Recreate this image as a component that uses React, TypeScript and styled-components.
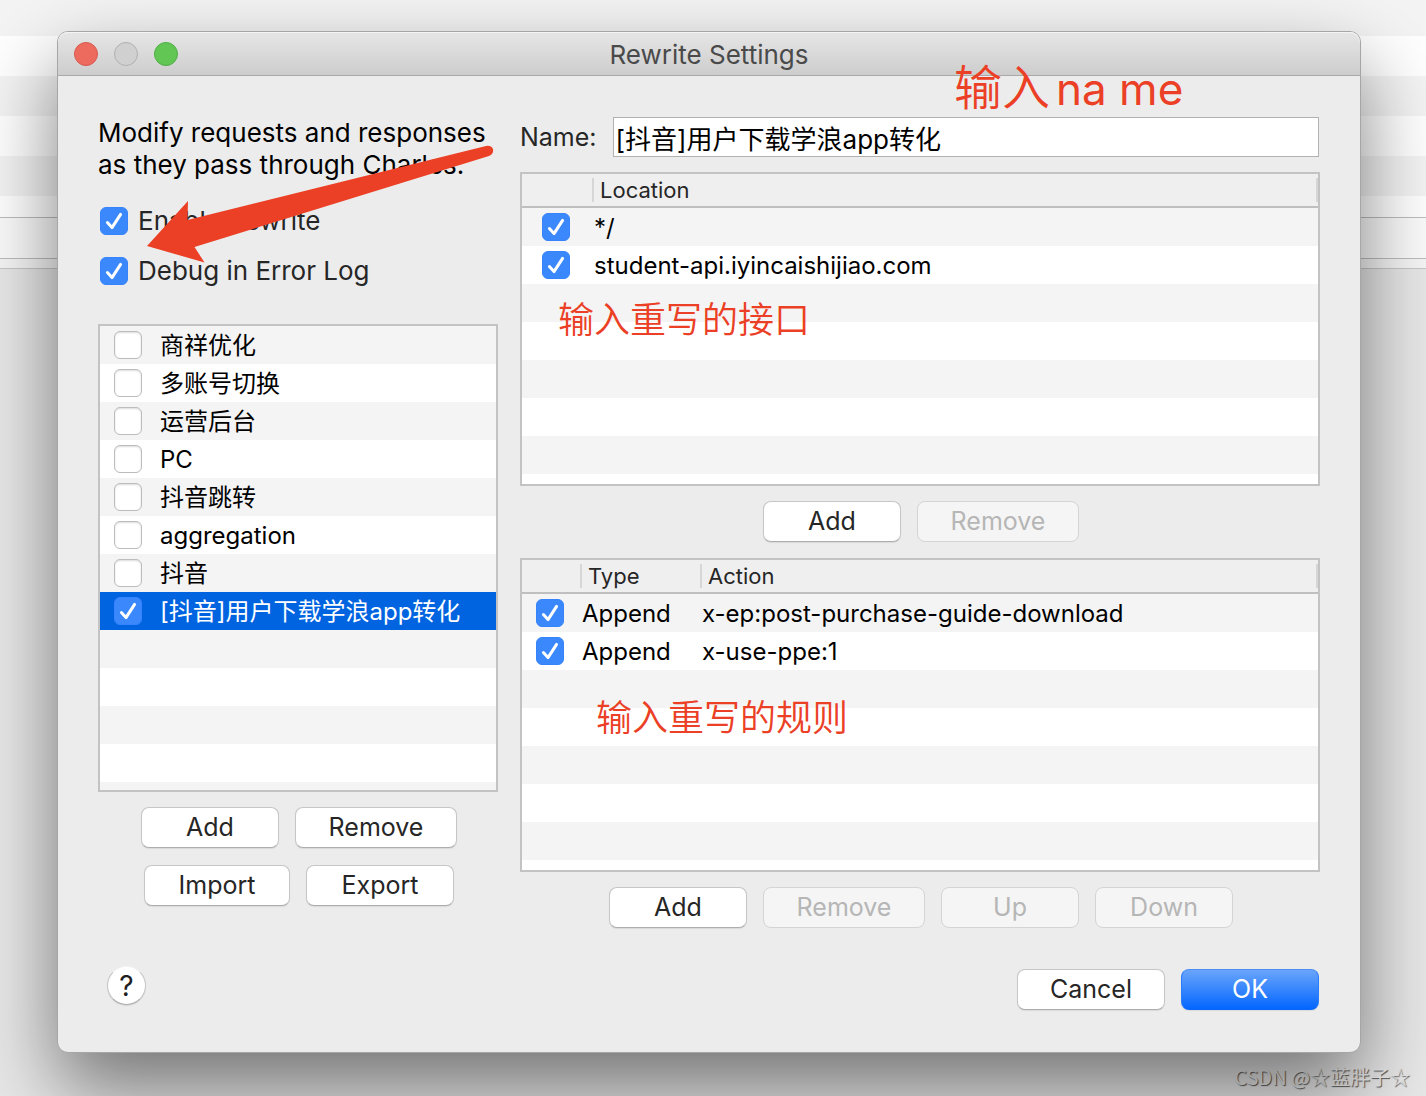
import React, { useId, useState } from "react";
import styled, { createGlobalStyle } from "styled-components";

const stripe = "#f4f4f4";
const frame = "#c3c3c3";
const red = "#eb4025";

const GlobalStyle = createGlobalStyle`
  * { box-sizing: border-box; }
  body {
    margin: 0;
    font-family: Inter, "Noto Sans CJK SC", sans-serif;
    font-size: 26px;
    line-height: 32px;
    color: #262626;
    background: #e8e8e8;
  }
`;

const Page = styled.div`
  display: grid;
  min-height: 100vh;
  overflow: hidden;
`;

const Backdrop = styled.div`
  grid-area: 1 / 1;
  background: #e8e8e8;
`;

const BackdropRow = styled.div<{ $tone: string; $height: number; $line?: string }>`
  height: ${(p) => p.$height}px;
  background: ${(p) => p.$tone};
  border-bottom: ${(p) => (p.$line ? `1px solid ${p.$line}` : "none")};
`;

const Watermark = styled.div`
  grid-area: 1 / 1;
  align-self: end;
  justify-self: end;
  padding: 0 16px 4px 0;
  font: 20px/30px "Noto Sans CJK SC", sans-serif;
  color: #ececec;
  text-shadow: 1px 1px 1px #555;
`;

const Dialog = styled.main`
  grid-area: 1 / 1;
  position: relative;
  align-self: start;
  margin: 31px 65px 43px 57px;
  border: 1px solid #a6a6a6;
  border-radius: 11px;
  background: #ececec;
  box-shadow: 0 36px 80px rgba(0, 0, 0, 0.5);
`;

const TitleBar = styled.header`
  display: grid;
  grid-template-columns: 1fr auto 1fr;
  align-items: center;
  height: 44px;
  padding: 0 16px;
  border-bottom: 1px solid #a9a9a9;
  border-radius: 10px 10px 0 0;
  background: linear-gradient(#e6e6e6, #cdcdcd);
  box-shadow: inset 0 1px #f4f4f4;
`;

const Lights = styled.div`
  display: flex;
  gap: 16px;
`;

const Light = styled.button<{ $fill: string; $edge: string }>`
  width: 24px;
  height: 24px;
  padding: 0;
  border: 1px solid ${(p) => p.$edge};
  border-radius: 50%;
  background: ${(p) => p.$fill};
`;

const Title = styled.h1`
  margin: 0;
  padding-top: 2px;
  font-size: 26px;
  font-weight: 400;
  line-height: 32px;
  color: #4a4a4a;
`;

const Body = styled.div`
  display: flex;
  gap: 22px;
  padding: 41px 40px 0;
`;

const Side = styled.section`
  flex: 0 0 400px;
`;

const Detail = styled.section`
  flex: 1;
  min-width: 0;
`;

const Intro = styled.p`
  margin: 0 0 24px;
  color: #000;
  white-space: nowrap;
`;

const Options = styled.div`
  display: grid;
  gap: 18px;
  padding-left: 2px;
  margin-bottom: 37px;
`;

const Option = styled.label`
  display: flex;
  align-items: center;
  gap: 10px;
`;

const TickBox = styled.span`
  display: inline-grid;
  flex: none;
  width: 28px;
  height: 28px;
  & > * { grid-area: 1 / 1; }
`;

const TickInput = styled.input`
  appearance: none;
  width: 28px;
  height: 28px;
  margin: 0;
  border: 1px solid #bcbcbc;
  border-radius: 6px;
  background: #fff;
  box-shadow: inset 0 1px 2px rgba(0, 0, 0, 0.14);
  &:checked {
    border-color: #3683fc;
    background: #3b88fd;
    box-shadow: none;
  }
  & + svg { visibility: hidden; pointer-events: none; }
  &:checked + svg { visibility: visible; }
`;

const RuleList = styled.ul`
  height: 468px;
  margin: 0;
  padding: 0;
  list-style: none;
  border: 2px solid ${frame};
  background: repeating-linear-gradient(${stripe} 0 38px, #fff 38px 76px);
`;

const RuleRow = styled.li<{ $selected: boolean }>`
  background: ${(p) => (p.$selected ? "#0064e1" : "transparent")};
  color: ${(p) => (p.$selected ? "#fff" : "#000")};
`;

const RuleLabel = styled.label`
  display: flex;
  align-items: center;
  gap: 18px;
  height: 38px;
  padding-left: 14px;
  font-size: 24px;
  white-space: nowrap;
`;

const RuleName = styled.span`
  padding-top: 2px;
`;

const Buttons = styled.div<{ $top: number }>`
  display: flex;
  justify-content: center;
  gap: 16px;
  margin-top: ${(p) => p.$top}px;
  padding-left: 2px;
`;

const Button = styled.button<{ $width: number }>`
  width: ${(p) => p.$width}px;
  height: 41px;
  padding: 0 0 2px;
  border: 1px solid #c6c6c6;
  border-bottom-color: #adadad;
  border-radius: 8px;
  background: #fff;
  box-shadow: 0 1px 1px rgba(0, 0, 0, 0.08);
  color: #262626;
  font: inherit;
  font-size: 25px;
  &:disabled {
    border-color: #d4d4d4;
    background: #f5f5f5;
    box-shadow: none;
    color: #b6b6b6;
  }
`;

const PrimaryButton = styled(Button)`
  border-color: #4a8ef5 #2a7cfb #0a68fa;
  background: linear-gradient(#6aa5fb, #0366ff);
  color: #fff;
`;

const NameRow = styled.div`
  display: flex;
  align-items: center;
  gap: 16px;
  margin-bottom: 15px;
  padding-right: 1px;
  label { font-size: 25px; }
`;

const NameInput = styled.input`
  flex: 1;
  min-width: 0;
  height: 40px;
  padding: 0 2px;
  border: 1px solid #b1b1b1;
  border-radius: 0;
  background: #fff;
  color: #000;
  font: inherit;
`;

const TableFrame = styled.div`
  height: 314px;
  border: 2px solid ${frame};
  background: repeating-linear-gradient(${stripe} 0 38px, #fff 38px 76px) 0 34px no-repeat;
  & + div + & { margin-top: 16px; }
`;

const Table = styled.table`
  width: 100%;
  table-layout: fixed;
  border-collapse: separate;
  border-spacing: 0;
  th {
    height: 34px;
    padding: 0;
    border-bottom: 2px solid #bfbfbf;
    background: #efefef;
    font-size: 22px;
    font-weight: 400;
    line-height: 24px;
    text-align: left;
  }
  td {
    height: 38px;
    padding: 2px 0 0 2px;
    font-size: 24px;
    line-height: 32px;
    color: #000;
    white-space: nowrap;
  }
  td:first-child { padding: 0; }
`;

const Heading = styled.span`
  display: block;
  height: 24px;
  padding-left: 6px;
  border-left: 2px solid #d6d6d6;
`;

const LastHeading = styled(Heading)`
  border-right: 2px solid #d6d6d6;
`;

const TickCell = styled.div`
  display: flex;
  justify-content: center;
  padding-right: 2px;
`;

const Footer = styled.footer`
  display: flex;
  align-items: center;
  gap: 16px;
  padding: 38px 41px 39px 49px;
`;

const HelpButton = styled.button`
  width: 39px;
  height: 39px;
  margin: 0 auto 8px 0;
  padding: 0;
  border: 1px solid #c6c6c6;
  border-top-color: #f2f2f2;
  border-bottom-color: #adadad;
  border-radius: 50%;
  background: #fff;
  box-shadow: 0 1px 1px rgba(0, 0, 0, 0.1);
  color: #1e1e1e;
  font: inherit;
  font-size: 28px;
`;

const Note = styled.div<{ $x: number; $y: number; $size: number }>`
  position: absolute;
  left: ${(p) => p.$x}px;
  top: ${(p) => p.$y}px;
  display: flex;
  align-items: baseline;
  gap: 6px;
  font-size: ${(p) => p.$size}px;
  font-weight: 350;
  line-height: 56px;
  color: ${red};
  white-space: nowrap;
  pointer-events: none;
`;

const NoteLatin = styled.span`
  font-size: 44px;
  font-weight: 400;
`;

const Arrow = styled.svg`
  position: absolute;
  left: 82px;
  top: 108px;
  pointer-events: none;
`;

function Tick(props: { id?: string; label?: string; on: boolean }) {
  const [on, setOn] = useState(props.on);
  return (
    <TickBox>
      <TickInput
        type="checkbox"
        id={props.id}
        aria-label={props.label}
        checked={on}
        onChange={(e) => setOn(e.target.checked)}
      />
      <svg width="28" height="28" viewBox="0 0 28 28" fill="none" aria-hidden="true">
        <path d="M7.400 15.600L12 20.600L20.600 7.400" stroke="#fff" strokeWidth="3" strokeLinecap="round" strokeLinejoin="round" />
      </svg>
    </TickBox>
  );
}

const rules = ["商祥优化", "多账号切换", "运营后台", "PC", "抖音跳转", "aggregation", "抖音", "[抖音]用户下载学浪app转化"];
const locations = ["*/", "student-api.iyincaishijiao.com"];
const actions = [
  ["Append", "x-ep:post-purchase-guide-download"],
  ["Append", "x-use-ppe:1"],
];

export default function App() {
  const id = useId();
  const [name, setName] = useState(rules[7]);
  return (
    <Page>
      <GlobalStyle />
      <Backdrop>
        <BackdropRow $tone="#f4f4f4" $height={36} />
        <BackdropRow $tone="#ffffff" $height={40} />
        <BackdropRow $tone="#f4f4f4" $height={40} />
        <BackdropRow $tone="#ffffff" $height={40} />
        <BackdropRow $tone="#f4f4f4" $height={40} />
        <BackdropRow $tone="#ffffff" $height={22} $line="#bdbdbd" />
        <BackdropRow $tone="#fbfbfb" $height={41} $line="#bdbdbd" />
        <BackdropRow $tone="#f6f6f6" $height={10} $line="#c8c8c8" />
      </Backdrop>
      <Dialog>
        <TitleBar>
          <Lights>
            <Light aria-label="Close" $fill="#ed6a5f" $edge="#d9584e" />
            <Light aria-label="Minimize" $fill="#d0d0d0" $edge="#b0b0b0" />
            <Light aria-label="Zoom" $fill="#62c655" $edge="#4fae43" />
          </Lights>
          <Title>Rewrite Settings</Title>
        </TitleBar>
        <Body>
          <Side>
            <Intro>
              Modify requests and responses
              <br />
              as they pass through Charles.
            </Intro>
            <Options>
              <Option htmlFor={id + "e"}>
                <Tick id={id + "e"} on />
                Enable Rewrite
              </Option>
              <Option htmlFor={id + "d"}>
                <Tick id={id + "d"} on />
                Debug in Error Log
              </Option>
            </Options>
            <RuleList>
              {rules.map((rule, i) => (
                <RuleRow key={rule} $selected={i === 7}>
                  <RuleLabel htmlFor={id + "r" + i}>
                    <Tick id={id + "r" + i} on={i === 7} />
                    <RuleName>{rule}</RuleName>
                  </RuleLabel>
                </RuleRow>
              ))}
            </RuleList>
            <Buttons $top={15}>
              <Button $width={138}>Add</Button>
              <Button $width={162}>Remove</Button>
            </Buttons>
            <Buttons $top={17}>
              <Button $width={146}>Import</Button>
              <Button $width={148}>Export</Button>
            </Buttons>
          </Side>
          <Detail>
            <NameRow>
              <label htmlFor={id + "n"}>Name:</label>
              <NameInput id={id + "n"} value={name} onChange={(e) => setName(e.target.value)} />
            </NameRow>
            <TableFrame>
              <Table>
                <colgroup>
                  <col width="70" />
                  <col />
                </colgroup>
                <thead>
                  <tr>
                    <th />
                    <th><LastHeading>Location</LastHeading></th>
                  </tr>
                </thead>
                <tbody>
                  {locations.map((location) => (
                    <tr key={location}>
                      <td><TickCell><Tick label={location} on /></TickCell></td>
                      <td>{location}</td>
                    </tr>
                  ))}
                </tbody>
              </Table>
            </TableFrame>
            <Buttons $top={15}>
              <Button $width={138}>Add</Button>
              <Button $width={162} disabled>Remove</Button>
            </Buttons>
            <TableFrame>
              <Table>
                <colgroup>
                  <col width="58" />
                  <col width="120" />
                  <col />
                </colgroup>
                <thead>
                  <tr>
                    <th />
                    <th><Heading>Type</Heading></th>
                    <th><LastHeading>Action</LastHeading></th>
                  </tr>
                </thead>
                <tbody>
                  {actions.map(([type, action]) => (
                    <tr key={action}>
                      <td><TickCell><Tick label={action} on /></TickCell></td>
                      <td>{type}</td>
                      <td>{action}</td>
                    </tr>
                  ))}
                </tbody>
              </Table>
            </TableFrame>
            <Buttons $top={15}>
              <Button $width={138}>Add</Button>
              <Button $width={162} disabled>Remove</Button>
              <Button $width={138} disabled>Up</Button>
              <Button $width={138} disabled>Down</Button>
            </Buttons>
          </Detail>
        </Body>
        <Footer>
          <HelpButton aria-label="Help">?</HelpButton>
          <Button $width={148}>Cancel</Button>
          <PrimaryButton $width={138}>OK</PrimaryButton>
        </Footer>
        <Arrow width="360" height="130" viewBox="140 140 360 130" aria-hidden="true">
          <path d="M147 246L188 201L187.500 220L486 146Q491 145 493 149Q494 154 489 156L194.500 247L204.500 262.500Z" fill={red} />
        </Arrow>
        <Note $x={896} $y={28} $size={48}>
          <span>输入</span>
          <NoteLatin>na me</NoteLatin>
        </Note>
        <Note $x={500} $y={260} $size={36}>输入重写的接口</Note>
        <Note $x={538} $y={658} $size={36}>输入重写的规则</Note>
      </Dialog>
      <Watermark>CSDN @☆蓝胖子☆</Watermark>
    </Page>
  );
}
